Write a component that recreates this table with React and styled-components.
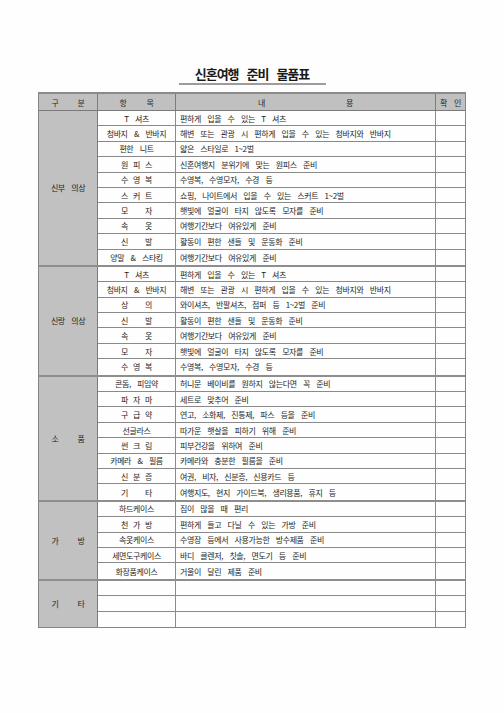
import React from 'react';
import styled, { createGlobalStyle } from 'styled-components';

const GlobalStyle = createGlobalStyle`
  html, body { margin: 0; padding: 0; background: #fdfefd; }
  body { font-family: "Noto Sans CJK KR", "Noto Sans", sans-serif; color: #1f1f1f; }
`;

const ROW = 15.4;
const COLS = '59px 78px 260px 1fr';

const Page = styled.div`
  width: 504px;
  height: 713px;
  box-sizing: border-box;
  padding-top: 66px;
  display: flex;
  flex-direction: column;
  align-items: center;
`;

const TitleWrap = styled.div`
  width: 147px;
  display: flex;
  justify-content: center;
  padding-bottom: 2px;
  border-bottom: 2px solid #9c9c9c;
`;

const Title = styled.h1`
  margin: 0;
  font-size: 13px;
  line-height: 15px;
  font-weight: 700;
  letter-spacing: -1px;
  word-spacing: 6px;
  color: #1a1a1a;
`;

const Table = styled.div`
  margin-top: 7px;
  width: 428px;
  box-sizing: border-box;
  border: 1px solid #858585;
  border-top: 2px solid #8a8a8a;
  font-size: 8px;
  letter-spacing: -0.4px;
  word-spacing: 5px;
`;

const HeaderRow = styled.div`
  display: grid;
  grid-template-columns: ${COLS};
  height: 16px;
  background: #c0c0c0;
  border-bottom: 1px solid #7a7a7a;
`;

const Group = styled.div`
  display: grid;
  grid-template-columns: ${COLS};
  grid-auto-rows: ${ROW}px;
  border-top: ${p => (p.$first ? 'none' : '2px solid #8e8e8e')};
`;

const HeadCell = styled.div`
  display: flex;
  align-items: center;
  justify-content: center;
  gap: ${p => p.$gap}px;
  box-sizing: border-box;
  border-right: ${p => (p.$last ? 'none' : '1px solid #7c7c7c')};
  color: #2a2a2a;
`;

const Category = styled.div`
  grid-row: span ${p => p.$rows};
  display: flex;
  align-items: center;
  justify-content: center;
  gap: ${p => p.$gap}px;
  background: #c1c1c1;
  box-sizing: border-box;
  border-right: 1px solid #7c7c7c;
  color: #1f1f1f;
`;

const Cell = styled.div`
  display: flex;
  align-items: center;
  justify-content: ${p => (p.$align === 'left' ? 'flex-start' : 'center')};
  padding-left: ${p => (p.$align === 'left' ? '4px' : '0')};
  gap: ${p => p.$gap || 0}px;
  box-sizing: border-box;
  white-space: nowrap;
  overflow: hidden;
  border-right: ${p => (p.$last ? 'none' : '1px solid #8a8a8a')};
  border-bottom: ${p => (p.$bottom ? 'none' : '1px solid #8a8a8a')};
`;

const Spread = ({ text, gap }) =>
  gap != null ? text.split(' ').map((t, i) => <span key={i}>{t}</span>) : text;

const groups = [
  {
    name: '신부 의상',
    rows: [
      ['T 셔츠', null, '편하게 입을 수 있는 T 셔츠'],
      ['청바지 & 반바지', null, '해변 또는 관광 시 편하게 입을 수 있는 청바지와 반바지'],
      ['편한 니트', null, '얇은 스타일로 1~2벌'],
      ['원 피 스', 5, '신혼여행지 분위기에 맞는 원피스 준비'],
      ['수 영 복', 5, '수영복, 수영모자, 수경 등'],
      ['스 커 트', 5, '쇼핑, 나이트에서 입을 수 있는 스커트 1~2벌'],
      ['모 자', 17, '햇빛에 얼굴이 타지 않도록 모자를 준비'],
      ['속 옷', 17, '여행기간보다 여유있게 준비'],
      ['신 발', 17, '활동이 편한 샌들 및 운동화 준비'],
      ['양말 & 스타킹', null, '여행기간보다 여유있게 준비'],
    ],
  },
  {
    name: '신랑 의상',
    rows: [
      ['T 셔츠', null, '편하게 입을 수 있는 T 셔츠'],
      ['청바지 & 반바지', null, '해변 또는 관광 시 편하게 입을 수 있는 청바지와 반바지'],
      ['상 의', 17, '와이셔츠, 반팔셔츠, 점퍼 등 1~2벌 준비'],
      ['신 발', 17, '활동이 편한 샌들 및 운동화 준비'],
      ['속 옷', 17, '여행기간보다 여유있게 준비'],
      ['모 자', 17, '햇빛에 얼굴이 타지 않도록 모자를 준비'],
      ['수 영 복', 5, '수영복, 수영모자, 수경 등'],
    ],
  },
  {
    name: '소 품',
    gap: 19,
    rows: [
      ['콘돔, 피임약', null, '허니문 베이비를 원하지 않는다면 꼭 준비'],
      ['파 자 마', 5, '세트로 맞추어 준비'],
      ['구 급 약', 5, '연고, 소화제, 진통제, 파스 등을 준비'],
      ['선글라스', null, '따가운 햇살을 피하기 위해 준비'],
      ['썬 크 림', 5, '피부건강을 위하여 준비'],
      ['카메라 & 필름', null, '카메라와 충분한 필름을 준비'],
      ['신 분 증', 5, '여권, 비자, 신분증, 신용카드 등'],
      ['기 타', 17, '여행지도, 현지 가이드북, 생리용품, 휴지 등'],
    ],
  },
  {
    name: '가 방',
    gap: 19,
    rows: [
      ['하드케이스', null, '짐이 많을 때 편리'],
      ['천 가 방', 5, '편하게 들고 다닐 수 있는 가방 준비'],
      ['속옷케이스', null, '수영장 등에서 사용가능한 방수제품 준비'],
      ['세면도구케이스', null, '바디 클렌저, 칫솔, 면도기 등 준비'],
      ['화장품케이스', null, '거울이 달린 제품 준비'],
    ],
  },
  {
    name: '기 타',
    gap: 19,
    rows: [
      ['', null, ''],
      ['', null, ''],
      ['', null, ''],
    ],
  },
];

export default function App() {
  return (
    <>
      <GlobalStyle />
      <Page>
        <TitleWrap>
          <Title>신혼여행 준비 물품표</Title>
        </TitleWrap>
        <Table>
          <HeaderRow>
            <HeadCell $gap={19}><span>구</span><span>분</span></HeadCell>
            <HeadCell $gap={20}><span>항</span><span>목</span></HeadCell>
            <HeadCell $gap={81}><span>내</span><span>용</span></HeadCell>
            <HeadCell $gap={7} $last><span>확</span><span>인</span></HeadCell>
          </HeaderRow>
          {groups.map((g, gi) => (
            <Group key={gi} $first={gi === 0}>
              <Category $rows={g.rows.length} $gap={g.gap || 0}>
                {g.gap ? g.name.split(' ').map((t, i) => <span key={i}>{t}</span>) : g.name}
              </Category>
              {g.rows.map((r, ri) => {
                const bottom = ri === g.rows.length - 1;
                return (
                  <React.Fragment key={ri}>
                    <Cell $gap={r[1]} $bottom={bottom}>
                      <Spread text={r[0]} gap={r[1]} />
                    </Cell>
                    <Cell $align="left" $bottom={bottom}>{r[2]}</Cell>
                    <Cell $last $bottom={bottom} />
                  </React.Fragment>
                );
              })}
            </Group>
          ))}
        </Table>
      </Page>
    </>
  );
}
